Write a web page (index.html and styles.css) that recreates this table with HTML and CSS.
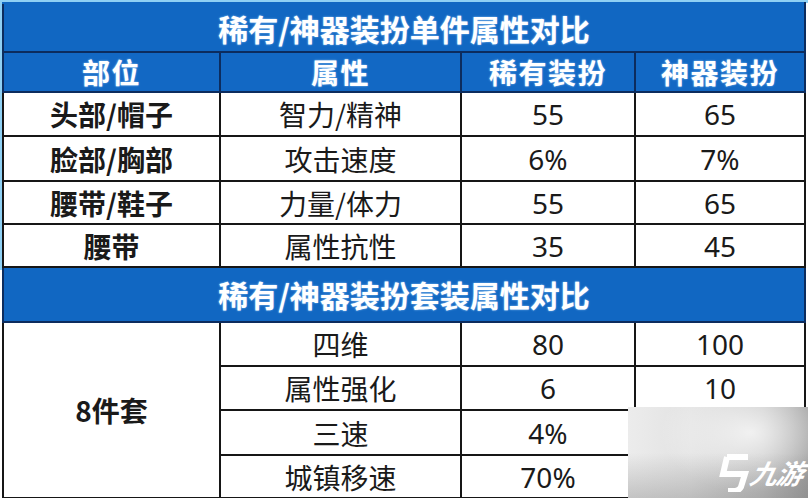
FILE: index.html
```html
<!DOCTYPE html>
<html lang="zh-CN">
<head>
<meta charset="utf-8">
<title>稀有/神器装扮属性对比</title>
<link rel="stylesheet" href="styles.css">
</head>
<body>
<div class="frame">
  <table class="cmp">
    <colgroup>
      <col class="c1"><col class="c2"><col class="c3"><col class="c4">
    </colgroup>
    <tr class="title t1"><td colspan="4">稀有/神器装扮单件属性对比</td></tr>
    <tr class="head"><td>部位</td><td>属性</td><td>稀有装扮</td><td>神器装扮</td></tr>
    <tr class="r r1"><td class="part">头部/帽子</td><td class="attr">智力/精神</td><td class="num">55</td><td class="num">65</td></tr>
    <tr class="r r2"><td class="part">脸部/胸部</td><td class="attr">攻击速度</td><td class="num">6%</td><td class="num">7%</td></tr>
    <tr class="r r3"><td class="part">腰带/鞋子</td><td class="attr">力量/体力</td><td class="num">55</td><td class="num">65</td></tr>
    <tr class="r r4"><td class="part">腰带</td><td class="attr">属性抗性</td><td class="num">35</td><td class="num">45</td></tr>
    <tr class="title t2"><td colspan="4">稀有/神器装扮套装属性对比</td></tr>
    <tr class="r r5"><td class="part set" rowspan="4">8件套</td><td class="attr">四维</td><td class="num">80</td><td class="num">100</td></tr>
    <tr class="r r6"><td class="attr">属性强化</td><td class="num">6</td><td class="num">10</td></tr>
    <tr class="r r7"><td class="attr">三速</td><td class="num">4%</td><td class="num"></td></tr>
    <tr class="r r8"><td class="attr">城镇移速</td><td class="num">70%</td><td class="num"></td></tr>
  </table>
  <div class="watermark">
    <svg class="wm-logo" viewBox="0 0 32 38" width="32" height="38" aria-hidden="true">
      <path d="M9 3 L30 3 M9 3 L5 20 L27 20 L23 33 Q21 37 15 37 L10 37" fill="none" stroke="#ffffff" stroke-width="6" stroke-linejoin="miter" stroke-linecap="butt"/>
    </svg>
    <span class="wm-text">九游</span>
  </div>
</div>
</body>
</html>
```
FILE: styles.css
```css
html, body {
  margin: 0;
  padding: 0;
  background: #ffffff;
}
body {
  width: 808px;
  height: 498px;
  overflow: hidden;
  font-family: "Noto Sans CJK SC", "Noto Sans", sans-serif;
}
.frame {
  position: relative;
  width: 808px;
  height: 498px;
  background: linear-gradient(#8fd0f4, #8fd0f4) top left / 808px 3px no-repeat,
              linear-gradient(#8fd0f4, #8fd0f4) top left / 3px 270px no-repeat,
              #ffffff;
  padding: 2px 0 0 2px;
  box-sizing: border-box;
}
.cmp {
  border-collapse: collapse;
  table-layout: fixed;
  width: 802px;
  border: 2px solid #1b1b1b;
}
.c1 { width: 217px; }
.c2 { width: 241px; }
.c3 { width: 174px; }
.c4 { width: 170px; }
.cmp td {
  padding: 0;
  text-align: center;
  vertical-align: middle;
  border: 2px solid #161616;
  line-height: 1;
  color: #1a1a1a;
  font-size: 28px;
}
.title td {
  background: #1167c2;
  color: #ffffff;
  font-weight: 700;
  font-size: 30px;
  letter-spacing: 0;
  border-color: #0c2c5e;
  text-shadow: 0 0 2px rgba(170, 215, 255, 0.9);
}
.t1 td { height: 47px; border-top-color: #1167c2; }
.t2 td { height: 51px; padding-bottom: 2px; }
.head td {
  background: #1268c4;
  color: #ffffff;
  font-weight: 700;
  font-size: 28px;
  letter-spacing: 1.5px;
  border-color: #0c2c5e;
  height: 38px;
  text-shadow: 0 0 2px rgba(170, 215, 255, 0.9);
}
.r1 td { height: 42px; }
.r2 td { height: 43px; }
.r3 td { height: 41px; }
.r4 td { height: 41px; }
.r5 td { height: 42px; }
.r6 td { height: 42px; }
.r7 td { height: 43px; }
.r8 td { height: 41px; }
.part {
  font-weight: 700;
  color: #141414;
}
.attr {
  font-weight: 400;
  color: #1c1c1c;
}
.num {
  font-family: "Noto Sans", "Noto Sans CJK SC", sans-serif;
  font-weight: 400;
  font-size: 29px;
  color: #1c1c1c;
}
.set {
  background: #ffffff;
}
.watermark {
  position: absolute;
  left: 628px;
  top: 407px;
  width: 180px;
  height: 91px;
  background:
    radial-gradient(ellipse 90px 60px at 68% 28%, rgba(255,255,255,0.75), rgba(255,255,255,0) 100%),
    linear-gradient(90deg, #ececec 0%, #e2e2e2 35%, #c2c2c2 75%, #9e9e9e 100%);
  overflow: hidden;
}
.watermark::after {
  content: "";
  position: absolute;
  left: 0;
  right: 0;
  bottom: 0;
  height: 45px;
  background: linear-gradient(rgba(120,120,120,0), rgba(120,120,120,0.35));
}
.wm-logo {
  position: absolute;
  left: 90px;
  top: 47px;
  z-index: 1;
}
.wm-text {
  position: absolute;
  left: 123px;
  top: 52px;
  z-index: 1;
  color: #ffffff;
  font-size: 27px;
  font-weight: 700;
  font-style: italic;
  line-height: 1;
  letter-spacing: -1px;
  transform: skewX(-12deg);
}
```
